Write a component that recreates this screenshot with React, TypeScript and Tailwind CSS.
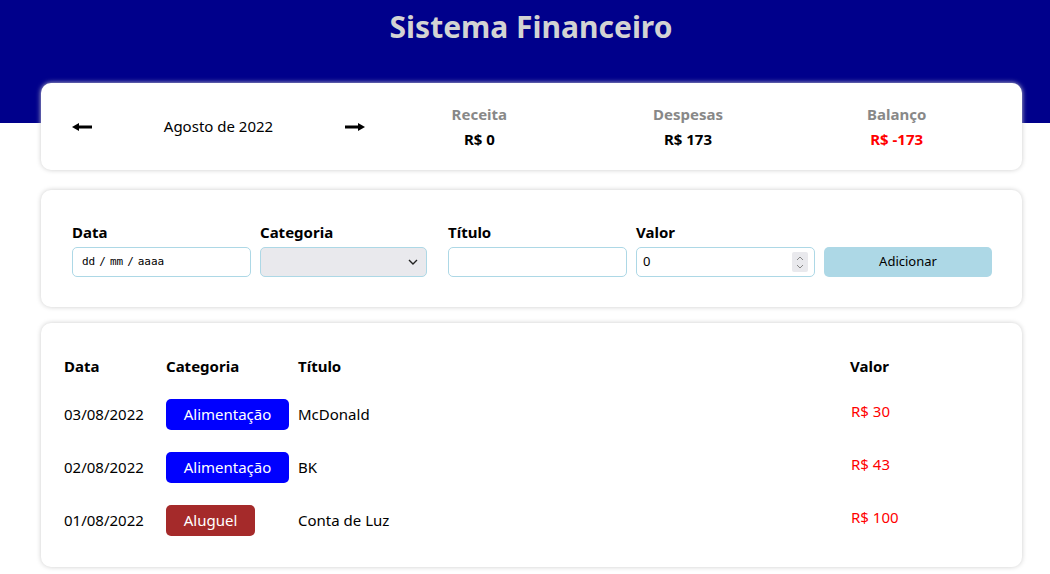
import React from 'react';

interface Item {
  date: string;
  category: string;
  title: string;
  value: number;
}

const items: Item[] = [
  { date: '03/08/2022', category: 'Alimentação', title: 'McDonald', value: 30 },
  { date: '02/08/2022', category: 'Alimentação', title: 'BK', value: 43 },
  { date: '01/08/2022', category: 'Aluguel', title: 'Conta de Luz', value: 100 },
];

const categoryStyle: Record<string, string> = {
  Alimentação: 'bg-[#0000ff] w-[123px]',
  Aluguel: 'bg-[#a52a2a] w-[89px]',
};

function Arrow({ dir }: { dir: 'left' | 'right' }) {
  return (
    <svg width="20" height="8" viewBox="0 0 20 8" className={dir === 'right' ? 'rotate-180' : ''}>
      <polygon points="0,4 7,0 7,2.5 20,2.5 20,5.5 7,5.5 7,8" fill="#000" />
    </svg>
  );
}

function InfoItem({ label, value, red }: { label: string; value: string; red?: boolean }) {
  return (
    <div className="flex-1 flex flex-col items-center">
      <div className="text-[15px] font-bold text-[#888] leading-[22px]">{label}</div>
      <div className={`text-[15px] font-bold leading-[22px] mt-[3px] ${red ? 'text-[#ff0000]' : 'text-black'}`}>{value}</div>
    </div>
  );
}

function Field({ label, width, children }: { label: string; width: string; children: React.ReactNode }) {
  return (
    <div className={`flex flex-col ${width}`}>
      <label className="text-[15px] font-bold leading-[20px] mb-[5px]">{label}</label>
      {children}
    </div>
  );
}

export default function App() {
  const income = 0;
  const expense = items.reduce((s, i) => s + i.value, 0);
  const balance = income - expense;

  return (
    <div className="min-h-[574px] bg-white text-black" style={{ fontFamily: '"Noto Sans", sans-serif' }}>
      <header className="h-[123px] bg-[#00008b]">
        <h1 className="text-center text-[30px] font-bold text-[#d3d3d3] pt-[6px] pl-[12px] leading-[42px]">Sistema Financeiro</h1>
      </header>

      <main className="-mt-[40px] ml-[41px] w-[981px] flex flex-col">
        {/* resumo */}
        <section className="bg-white rounded-[10px] shadow-[0_0_5px_#ccc] h-[87px] px-[21px] flex items-center">
          <div className="flex-1 flex items-center">
            <button className="w-[40px] h-[40px] flex items-center justify-center">
              <Arrow dir="left" />
            </button>
            <div className="flex-1 text-center text-[15px]">Agosto de 2022</div>
            <button className="w-[40px] h-[40px] flex items-center justify-center">
              <Arrow dir="right" />
            </button>
          </div>
          <div className="flex-[2] flex">
            <InfoItem label="Receita" value={`R$ ${income}`} />
            <InfoItem label="Despesas" value={`R$ ${expense}`} />
            <InfoItem label="Balanço" value={`R$ ${balance}`} red={balance < 0} />
          </div>
        </section>

        {/* formulario */}
        <section className="mt-[20px] bg-white rounded-[10px] shadow-[0_0_5px_#ccc] pt-[32px] pb-[30px] pl-[31px] pr-[30px] flex items-end">
          <Field label="Data" width="w-[179px]">
            <div
              className="h-[30px] border border-[#add8e6] rounded-[5px] pl-[9px] flex items-center gap-[4px] text-[11px]"
              style={{ fontFamily: '"DejaVu Sans Mono", monospace' }}
            >
              <span>dd</span>
              <span>/</span>
              <span>mm</span>
              <span>/</span>
              <span>aaaa</span>
            </div>
          </Field>
          <div className="w-[9px]" />
          <Field label="Categoria" width="w-[167px]">
            <div className="h-[30px] border border-[#add8e6] rounded-[5px] bg-[#e9e9ed] flex items-center justify-end pr-[8px]">
              <svg width="10" height="6" viewBox="0 0 10 6">
                <path d="M1 1 L5 5 L9 1" stroke="#222" strokeWidth="1.4" fill="none" />
              </svg>
            </div>
          </Field>
          <div className="w-[21px]" />
          <Field label="Título" width="w-[179px]">
            <input className="h-[30px] border border-[#add8e6] rounded-[5px] px-[8px] outline-none" />
          </Field>
          <div className="w-[9px]" />
          <Field label="Valor" width="w-[179px]">
            <div className="relative h-[30px] border border-[#add8e6] rounded-[5px] flex items-center px-[6px] text-[13px]">
              0
              <div className="absolute right-[6px] top-[4px] w-[16px] h-[20px] bg-[#e9e9ed] rounded-[2px] flex flex-col items-center justify-center gap-[3px]">
                <svg width="8" height="5" viewBox="0 0 8 5"><path d="M1 4 L4 1 L7 4" stroke="#888" strokeWidth="1" fill="none" /></svg>
                <svg width="8" height="5" viewBox="0 0 8 5"><path d="M1 1 L4 4 L7 1" stroke="#888" strokeWidth="1" fill="none" /></svg>
              </div>
            </div>
          </Field>
          <div className="w-[9px]" />
          <button className="w-[168px] h-[30px] bg-[#add8e6] rounded-[5px] text-[13px] text-black">Adicionar</button>
        </section>

        {/* tabela */}
        <section className="mt-[16px] bg-white rounded-[10px] shadow-[0_0_5px_#ccc] pt-[25px] pb-[20px] pl-[23px] pr-[20px]">
          <div className="grid grid-cols-[102px_132px_1fr_152px] h-[36px] items-center text-[15px] font-bold">
            <div>Data</div>
            <div>Categoria</div>
            <div>Título</div>
            <div>Valor</div>
          </div>
          <div className="mt-[4px]">
            {items.map((item, idx) => (
              <div key={idx} className="grid grid-cols-[102px_132px_1fr_152px] h-[53px] items-center text-[15px]">
                <div>{item.date}</div>
                <div>
                  <span className={`inline-flex items-center justify-center h-[31px] rounded-[5px] text-white ${categoryStyle[item.category]}`}>
                    {item.category}
                  </span>
                </div>
                <div>{item.title}</div>
                <div className="pl-[1px] pb-[6px] text-[#ff0000]">R$ {item.value}</div>
              </div>
            ))}
          </div>
        </section>
      </main>
    </div>
  );
}
